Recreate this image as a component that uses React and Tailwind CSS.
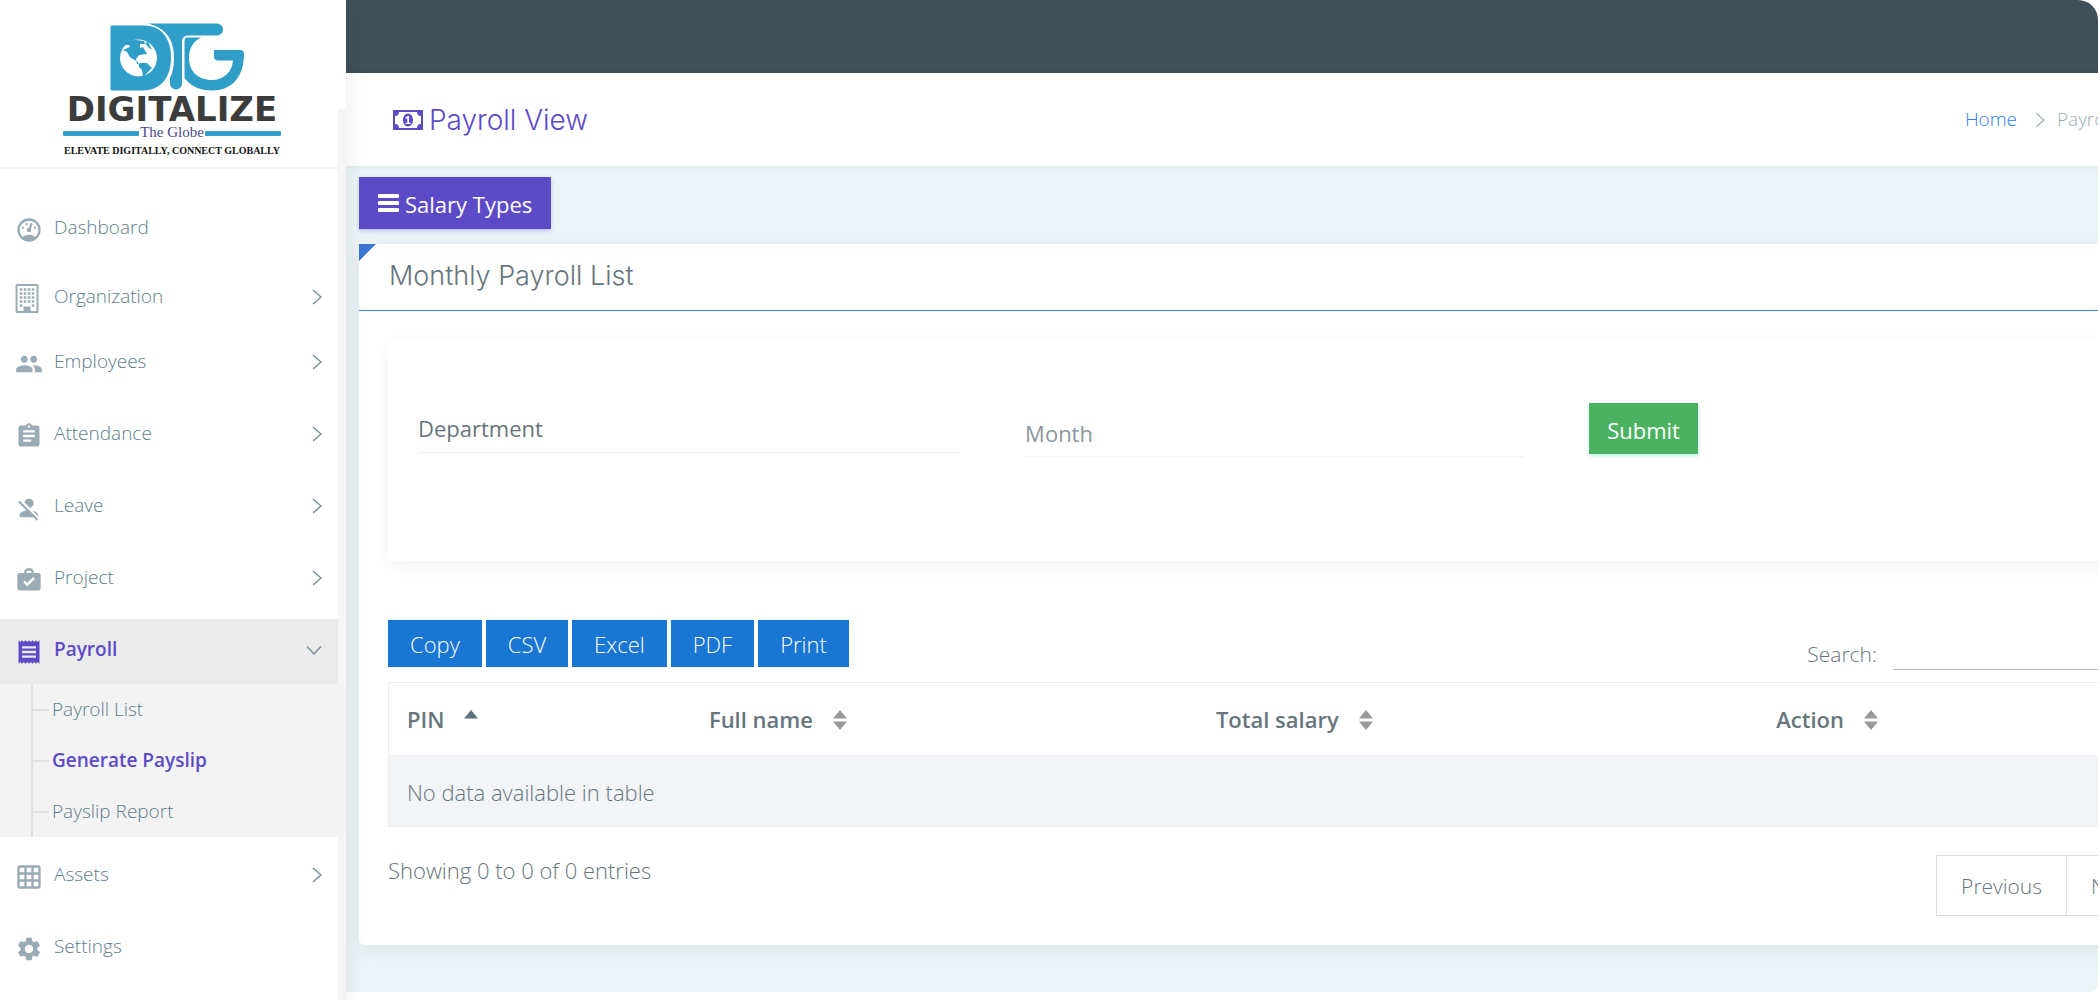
import React, { useState } from "react";
import { MdPeople, MdAssignment, MdReceipt, MdGridOn, MdSettings } from "react-icons/md";

const GaugeIcon = () => (
  <svg viewBox="0 0 24 24" className="w-7 h-7" fill="currentColor">
    <path d="M17.3,18C19,16.5 20,14.4 20,12A8,8 0 0,0 12,4A8,8 0 0,0 4,12C4,14.4 5,16.5 6.7,18C8.2,16.7 10,16 12,16C14,16 15.9,16.7 17.3,18M12,2A10,10 0 0,1 22,12A10,10 0 0,1 12,22A10,10 0 0,1 2,12A10,10 0 0,1 12,2M7,9A1,1 0 0,1 8,10A1,1 0 0,1 7,11A1,1 0 0,1 6,10A1,1 0 0,1 7,9M10,6A1,1 0 0,1 11,7A1,1 0 0,1 10,8A1,1 0 0,1 9,7A1,1 0 0,1 10,6M17,9A1,1 0 0,1 18,10A1,1 0 0,1 17,11A1,1 0 0,1 16,10A1,1 0 0,1 17,9M14.4,6.1C14.9,6.3 15.1,6.9 15,7.4L13.6,10.8C13.8,11.1 14,11.5 14,12A2,2 0 0,1 12,14A2,2 0 0,1 10,12C10,11 10.7,10.1 11.7,10L13.1,6.7C13.3,6.1 13.9,5.9 14.4,6.1Z" />
  </svg>
);

const BuildingIcon = () => (
  <svg viewBox="0 0 23 29" className="w-6 h-[29px] mr-1" fill="currentColor">
    <path
      fillRule="evenodd"
      d="M1.500 0h20a1.500 1.500 0 0 1 1.500 1.500v26a1.500 1.500 0 0 1-1.500 1.500h-20A1.500 1.500 0 0 1 0 27.500v-26A1.500 1.500 0 0 1 1.500 0zM2 2v25h6v-4.500h7V27h6V2z"
    />
    {[4.2, 8.2, 12.2, 16.2].map((y) =>
      [4.2, 8.2, 12.2, 16.2].map((x) => <rect key={`${x}-${y}`} x={x} y={y} width="2.6" height="2.6" rx="0.5" />)
    )}
    <rect x="4.2" y="20.2" width="2.6" height="2.6" rx="0.5" />
    <rect x="16.2" y="20.2" width="2.6" height="2.6" rx="0.5" />
  </svg>
);

const AccountOffIcon = () => (
  <svg viewBox="0 0 24 24" className="w-7 h-7" fill="currentColor">
    <path d="M12,4A4,4 0 0,1 16,8C16,9.95 14.6,11.58 12.75,11.93L8.07,7.25C8.42,5.4 10.05,4 12,4M12.28,14L18.28,20L20,21.72L18.73,23L15.73,20H4V18C4,16.16 6.5,14.61 9.87,14.14L2.78,7.05L4.05,5.78L12.28,14M20,18V19.18L15.14,14.32C18,14.93 20,16.35 20,18Z" />
  </svg>
);

const BriefcaseCheckIcon = () => (
  <svg viewBox="0 0 24 24" className="w-7 h-7" fill="currentColor">
    <path
      fillRule="evenodd"
      d="M10 2h4l2 2v2h4a2 2 0 0 1 2 2v11a2 2 0 0 1-2 2H4a2 2 0 0 1-2-2V8c0-1.110.890-2 2-2h4V4zM10 4v2h4V4zM10.500 17.500l6.590-6.590L15.680 9.500l-5.180 5.170L8.410 12.590 7 14z"
    />
  </svg>
);

const MoneyIcon = () => (
  <svg viewBox="0 0 30 20" className="w-[30px] h-5" fill="currentColor">
    <path fillRule="evenodd" d="M0 0h30v20H0zM6 2a4 4 0 0 1-4 4v8a4 4 0 0 1 4 4h18a4 4 0 0 1 4-4V6a4 4 0 0 1-4-4z" />
    <path
      fillRule="evenodd"
      d="M15 3.500c3 0 5 3 5 6.500s-2 6.500-5 6.500-5-3-5-6.500 2-6.500 5-6.500zM14.500 6l-2.300 2 .900 1.100 1.200-.9v4.500h-1.700V14h5v-1.300H16V6z"
    />
  </svg>
);

const Chevron = ({ down }) => (
  <svg viewBox="0 0 16 16" className="w-4 h-4" fill="none" stroke="currentColor" strokeWidth="1.5">
    <path d={down ? "M1 4.500l7 7.500 7-7.500" : "M7 1l8 7-8 7"} />
  </svg>
);

const SortIcon = ({ active }) => (
  <svg viewBox="0 0 14 20" className="w-[14px] h-5" fill={active ? "#5f717b" : "#999"}>
    <path d="M7 0l7 8.500H0z" />
    {!active && <path d="M7 20l7-8.500H0z" />}
  </svg>
);

const Logo = () => (
  <svg viewBox="0 0 338 167" className="w-full" role="img" aria-label="Digitalize The Globe">
    <g fill="#2f9ec8">
      <path d="M112 25.500h32c19 0 27 15 27 32 0 20-10 33-29 33h-30a1.500 1.500 0 0 1-1.500-1.500V27a1.500 1.500 0 0 1 1.500-1.500z" />
      <path d="M148 23.500h69a5.500 5.500 0 0 1 0 12h-28c-5 0-7 2-7 7v41a6 6 0 0 1-12 0V78c3-6 4-12 4-21 0-17-8-29-26-33.500z" />
      <path d="M186 37.500h15c-8 4-12 11-12 20 0 14 9 22.500 23 22.500 12 0 20-8 21-19.500h-15a4 4 0 0 1-4-4V50h26a4 4 0 0 1 4 4c0 24-13 36.500-32 36.500-12 0-21-4-27.500-12.500V41a4 4 0 0 1 1.500-3.500z" />
    </g>
    <circle cx="138.500" cy="58" r="18.500" fill="#fff" />
    <path
      fill="#2f9ec8"
      d="M121 50c4 0 5-2 9-3l-1-2-5 0c3-4 7-5 12-5l8 1 1 3-5 0 0 4 3-1 4 7-8 1-3 4 1 5 4-1 6 0 5 5-6 6-3 3-1-7-3-3-1-5-7-4c-4-3-1-7-10-8zM145 43l3 4 4 3-4-8z"
    />
    <text x="172" y="121" textAnchor="middle" fill="#3c3c3c" className="font-['DejaVu_Sans',sans-serif] font-bold text-[34px]">
      DIGITALIZE
    </text>
    <rect x="63" y="131" width="76" height="5" rx="1" fill="#2f9ec8" />
    <rect x="205" y="131" width="76" height="5" rx="1" fill="#2f9ec8" />
    <text x="172" y="137" textAnchor="middle" fill="#4b4a8c" className="font-['Liberation_Serif',serif] text-[15px]">
      The Globe
    </text>
    <text x="172" y="154" textAnchor="middle" fill="#111" className="font-['Liberation_Serif',serif] font-bold text-[10px]">
      ELEVATE DIGITALLY, CONNECT GLOBALLY
    </text>
  </svg>
);

const menu = [
  { name: "Dashboard", icon: <GaugeIcon />, space: "mb-1" },
  { name: "Organization", icon: <BuildingIcon />, arrow: true, space: "mb-0" },
  { name: "Employees", icon: <MdPeople size={28} />, arrow: true, space: "mb-[7px]" },
  { name: "Attendance", icon: <MdAssignment size={28} />, arrow: true, space: "mb-[7px]" },
  { name: "Leave", icon: <AccountOffIcon />, arrow: true, space: "mb-[7px]" },
  { name: "Project", icon: <BriefcaseCheckIcon />, arrow: true, space: "mb-[7px]" },
  {
    name: "Payroll",
    icon: <MdReceipt size={28} />,
    arrow: true,
    active: true,
    space: "mb-0",
    children: ["Payroll List", "Generate Payslip", "Payslip Report"],
  },
  { name: "Assets", icon: <MdGridOn size={28} />, arrow: true, space: "mb-[7px]" },
  { name: "Settings", icon: <MdSettings size={28} />, space: "mb-0" },
];

const columns = [
  { name: "PIN", width: "w-[17%]", active: true },
  { name: "Full name", width: "w-[28.5%]" },
  { name: "Total salary", width: "w-[31.5%]" },
  { name: "Action", width: "w-[23%]" },
];

const Sidebar = () => (
  <aside className="w-[346px] shrink-0 flex flex-col relative z-10 bg-white shadow-[1px_0_20px_rgba(0,0,0,0.08)]">
    <div className="flex">
      <div className="w-[338px] border-b-2 border-[#f2f2f2]">
        <Logo />
      </div>
      <div className="flex-1 mt-[109px] bg-[#f5f5f5]" />
    </div>
    <nav className="flex-1 bg-[#f5f5f5]">
      <ul className="pt-7 mr-2 h-full bg-white">
        {menu.map((item) => (
          <li key={item.name} className={item.space}>
            <a
              href="#"
              className={`h-[65px] pl-[15px] pr-4 pb-1 flex items-center ${
                item.active ? "bg-[#ebebeb] text-[#5c4ac7] font-semibold" : "text-[#607d8b] font-light"
              }`}
            >
              <span className={`w-[39px] pt-1 flex ${item.active ? "" : "text-[#99abb4]"}`}>{item.icon}</span>
              <span className="flex-1 text-[19px]">{item.name}</span>
              {item.arrow && (
                <span className="text-[#7b8f99]">
                  <Chevron down={item.active} />
                </span>
              )}
            </a>
            {item.children && (
              <ul className="-mr-2 mb-[7px] pl-[31px] bg-[#f3f3f3]">
                {item.children.map((child) => (
                  <li key={child} className="h-[51px] flex items-center border-l-2 border-[#e0e0e0]">
                    <span className="w-4 h-[2px] mr-[3px] bg-[#e0e0e0]" />
                    <a
                      href="#"
                      className={`text-[19px] ${
                        child === "Generate Payslip" ? "text-[#5c4ac7] font-semibold" : "text-[#607d8b] font-light"
                      }`}
                    >
                      {child}
                    </a>
                  </li>
                ))}
              </ul>
            )}
          </li>
        ))}
      </ul>
    </nav>
  </aside>
);

const App = () => {
  const [department, setDepartment] = useState("");
  const [month, setMonth] = useState("");
  const [search, setSearch] = useState("");

  return (
    <div className="min-h-screen flex overflow-hidden bg-white font-['Open_Sans',sans-serif] text-[#67757c]">
      <Sidebar />
      <main className="flex-1 min-w-0 mr-[2px] mb-2 overflow-hidden rounded-tr-[20px] rounded-br-lg bg-[#ecf4f8]">
        <header className="h-[73px] bg-[#3e5059]" />

        {/* the content is wider than the viewport and gets cut on the right */}
        <div className="-mr-[100px]">
          <div className="h-[93px] pl-[47px] pr-[84px] flex items-center justify-between bg-white shadow-[1px_0_5px_rgba(0,0,0,0.1)]">
            <h3 className="flex items-center gap-[6px] font-['Inter',sans-serif] font-light text-[28px] text-[#5c4ac7]">
              <MoneyIcon />
              Payroll View
            </h3>
            <ol className="flex items-center text-[19px] font-light">
              <li>
                <a href="#" className="text-[#2f80f5]">Home</a>
              </li>
              <li className="mx-3 text-[#a6b7bf]">
                <Chevron />
              </li>
              <li className="text-[#99abb4]">Payroll</li>
            </ol>
          </div>

          <div className="pl-[13px] pt-[11px]">
            <button
              type="button"
              className="h-[52px] px-[19px] flex items-center gap-[6px] bg-[#5c4ac7] text-[22px] text-white shadow-[0_2px_4px_rgba(92,74,199,0.3)]"
            >
              <svg viewBox="0 0 21 18" className="w-[21px] h-[18px]" fill="currentColor">
                <rect width="21" height="4" rx="1" />
                <rect y="7" width="21" height="4" rx="1" />
                <rect y="14" width="21" height="4" rx="1" />
              </svg>
              <span className="pt-[3px]">Salary Types</span>
            </button>

            <section className="mt-[15px] mb-[46px] rounded-b-[5px] bg-white shadow-[0_5px_20px_rgba(0,0,0,0.06)]">
              <div className="h-[67px] pl-[30px] relative flex items-center border-b border-[#398bdf]">
                <span className="absolute left-0 top-0 border-t-[17px] border-r-[17px] border-t-[#3a76d2] border-r-transparent" />
                <h4 className="pb-[2px] font-['Inter',sans-serif] font-light text-[27px]">Monthly Payroll List</h4>
              </div>

              <div className="py-[29px] pl-[29px] pr-[30px]">
                <form
                  className="h-[221px] pl-[30px] pr-[29px] pt-[63px] flex items-start gap-[65px] rounded-[5px] bg-white shadow-[0_5px_20px_rgba(0,0,0,0.05)]"
                  onSubmit={(e) => e.preventDefault()}
                >
                  <select
                    aria-label="Department"
                    value={department}
                    onChange={(e) => setDepartment(e.target.value)}
                    className="w-[31.5%] h-[50px] pt-[2px] appearance-none border-b border-[#e9edef] text-[22px]"
                  >
                    <option value="">Department</option>
                  </select>
                  <input
                    type="text"
                    aria-label="Month"
                    placeholder="Month"
                    value={month}
                    onChange={(e) => setMonth(e.target.value)}
                    className="w-[29%] h-[55px] pt-[6px] border-b-2 border-[#f4f6f7] text-[22px] placeholder:text-[#8b969c]"
                  />
                  <button type="submit" className="h-[51px] px-[18px] pt-1 bg-[#4ab261] text-[22px] text-white shadow-[0_2px_4px_rgba(38,198,162,0.3)]">
                    Submit
                  </button>
                </form>

                <div className="mt-[59px] flex items-start justify-between">
                  <div className="flex gap-1">
                    {["Copy", "CSV", "Excel", "PDF", "Print"].map((label) => (
                      <button key={label} type="button" className="h-[47px] px-[22px] pt-[2px] bg-[#1976d2] text-[22px] font-light text-white">
                        {label}
                      </button>
                    ))}
                  </div>
                  <label className="pt-[10px] flex items-end text-[21px] font-light">
                    <span>Search:</span>
                    <input
                      type="text"
                      value={search}
                      onChange={(e) => setSearch(e.target.value)}
                      className="w-[275px] h-10 ml-4 border-b border-[#b1b8bb]"
                    />
                  </label>
                </div>

                <table className="w-full mt-3 table-fixed text-left text-[22px] border border-[#ebedee]">
                  <thead>
                    <tr className="h-[72px]">
                      {columns.map((column) => (
                        <th key={column.name} className={`pl-[18px] pt-[2px] font-semibold ${column.width}`}>
                          <span className="flex items-center gap-5">
                            {column.name}
                            <SortIcon active={column.active} />
                          </span>
                        </th>
                      ))}
                    </tr>
                  </thead>
                  <tbody>
                    <tr className="h-[72px] bg-[#f2f4f8]">
                      <td colSpan={4} className="pl-[18px] pt-1 font-light">
                        No data available in table
                      </td>
                    </tr>
                  </tbody>
                </table>

                <div className="mt-7 flex items-start justify-between font-light">
                  <p className="text-[22px] leading-[30px]">Showing 0 to 0 of 0 entries</p>
                  <div className="flex text-[21px]">
                    <button type="button" className="h-[61px] px-6 pt-[2px] border border-[#ddd]">Previous</button>
                    <button type="button" className="h-[61px] w-[101px] px-6 pt-[2px] border border-l-0 border-[#ddd] text-left">Next</button>
                  </div>
                </div>
              </div>
            </section>
          </div>
        </div>
      </main>
    </div>
  );
};

export default App;
